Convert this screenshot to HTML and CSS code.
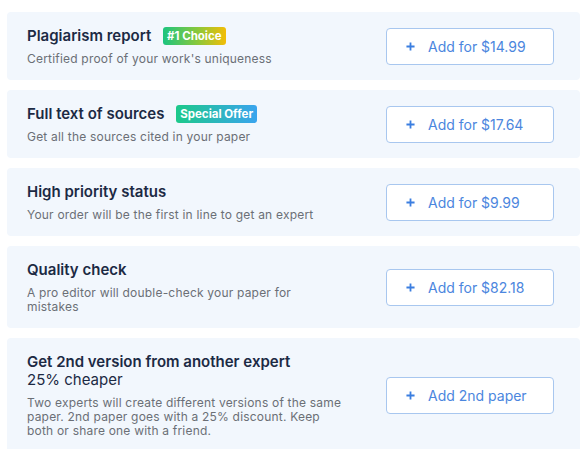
FILE: index.html
```html
<!DOCTYPE html>
<html lang="en">
<head>
<meta charset="utf-8">
<title>Extras</title>
<link rel="stylesheet" href="styles.css">
</head>
<body>
<div class="list">
  <div class="card">
    <div class="info">
      <div class="title">Plagiarism report <span class="badge badge-choice">#1 Choice</span></div>
      <div class="desc">Certified proof of your work's uniqueness</div>
    </div>
    <button class="add"><svg class="plus" viewBox="0 0 10 10"><path d="M5 0.5V9.5M0.5 5H9.5"/></svg><span>Add for $14.99</span></button>
  </div>
  <div class="card">
    <div class="info">
      <div class="title">Full text of sources <span class="badge badge-offer">Special Offer</span></div>
      <div class="desc">Get all the sources cited in your paper</div>
    </div>
    <button class="add"><svg class="plus" viewBox="0 0 10 10"><path d="M5 0.5V9.5M0.5 5H9.5"/></svg><span>Add for $17.64</span></button>
  </div>
  <div class="card">
    <div class="info">
      <div class="title">High priority status</div>
      <div class="desc">Your order will be the first in line to get an expert</div>
    </div>
    <button class="add"><svg class="plus" viewBox="0 0 10 10"><path d="M5 0.5V9.5M0.5 5H9.5"/></svg><span>Add for $9.99</span></button>
  </div>
  <div class="card">
    <div class="info">
      <div class="title">Quality check</div>
      <div class="desc">A pro editor will double-check your paper for<br>mistakes</div>
    </div>
    <button class="add"><svg class="plus" viewBox="0 0 10 10"><path d="M5 0.5V9.5M0.5 5H9.5"/></svg><span>Add for $82.18</span></button>
  </div>
  <div class="card">
    <div class="info">
      <div class="title">Get 2nd version from another expert<br><span class="light">25% cheaper</span></div>
      <div class="desc">Two experts will create different versions of the same<br>paper. 2nd paper goes with a 25% discount. Keep<br>both or share one with a friend.</div>
    </div>
    <button class="add"><svg class="plus" viewBox="0 0 10 10"><path d="M5 0.5V9.5M0.5 5H9.5"/></svg><span>Add 2nd paper</span></button>
  </div>
</div>
</body>
</html>
```
FILE: styles.css
```css
html, body {
  margin: 0;
  padding: 0;
  background: #ffffff;
}
body {
  font-family: Inter, "Open Sans", "Liberation Sans", sans-serif;
  overflow: hidden;
}
.list {
  display: flex;
  flex-direction: column;
  gap: 10px;
  padding: 12px 5px 0 7px;
}
.card {
  display: flex;
  align-items: center;
  justify-content: space-between;
  background: #f2f7fd;
  border-radius: 4px;
  padding: 15px 26px 14px 20px;
}
.info {
  display: flex;
  flex-direction: column;
  gap: 7px;
}
.title {
  font-size: 15px;
  line-height: 18px;
  font-weight: 600;
  color: #1c2a44;
  display: block;
}
.title .light {
  font-weight: 400;
}
.badge {
  display: inline-block;
  vertical-align: top;
  margin-left: 8px;
  height: 18px;
  line-height: 18px;
  padding: 0 4px;
  border-radius: 3px;
  color: #ffffff;
  font-size: 11.5px;
  font-weight: 700;
}
.badge-choice {
  background: linear-gradient(90deg, #1cc47f 0%, #8ac83a 55%, #f3bd06 100%);
}
.badge-offer {
  background: linear-gradient(90deg, #1dc98a 0%, #3aa4ee 100%);
}
.desc {
  font-size: 12px;
  line-height: 14px;
  letter-spacing: 0.2px;
  color: #6b6f76;
}
.add {
  display: flex;
  align-items: center;
  gap: 13px;
  width: 168px;
  height: 37px;
  padding: 0 0 0 19px;
  background: #ffffff;
  border: 1px solid #a8c7ef;
  border-radius: 4px;
  font-family: inherit;
  font-size: 14px;
  color: #4b86de;
  cursor: pointer;
  flex-shrink: 0;
}
.plus {
  width: 9px;
  height: 9px;
  fill: none;
  stroke: #3b7ee0;
  stroke-width: 2;
}
```
